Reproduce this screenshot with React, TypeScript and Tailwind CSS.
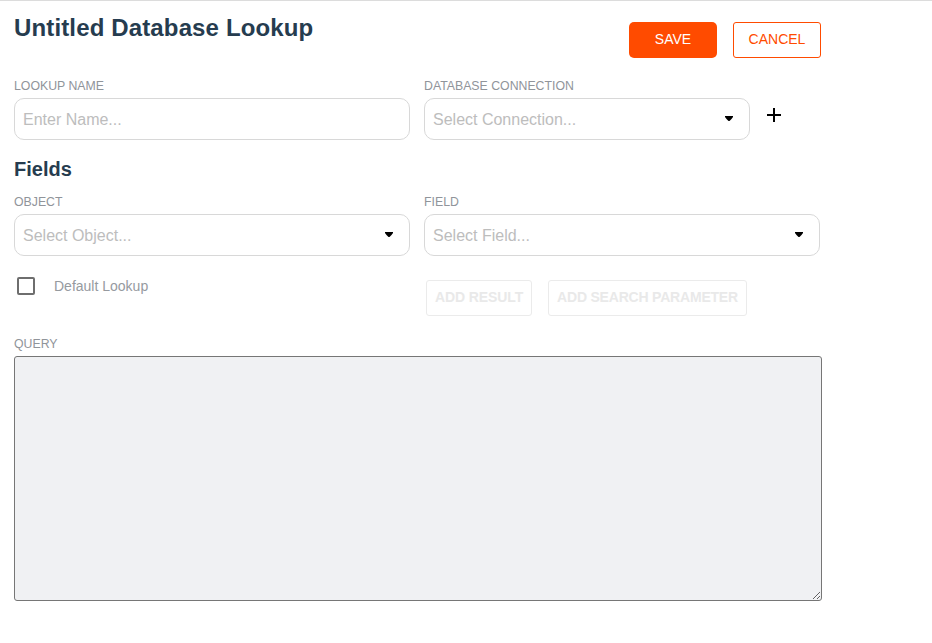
import React from "react";

function Caret() {
  return (
    <svg width="8" height="5" viewBox="0 0 8 5" className="absolute right-[16px] top-[17px]">
      <path d="M0 0 H8 V1 L6.5 3 L4.5 5 H3.5 L1.5 3 L0 1 Z" fill="#000" />
    </svg>
  );
}

function Label({ children }: { children: React.ReactNode }) {
  return <div className="text-[12.3px] leading-[14px] text-[#90949a] uppercase">{children}</div>;
}

function Select({ text, className }: { text: string; className: string }) {
  return (
    <div className={`relative h-[42px] mt-[5px] rounded-[10px] border border-[#d8d8d8] bg-white pl-[8px] pt-[2px] flex items-center text-[16px] text-[#bdbdbd] ${className}`}>
      {text}
      <Caret />
    </div>
  );
}

export default function App() {
  return (
    <div className="w-[932px] h-[643px] bg-white border-t border-[#dcdcdc] font-['Liberation_Sans',Arial,sans-serif] overflow-hidden">
      <div className="w-[808px] ml-[14px]">
        <div className="flex h-[78px]">
          <h1 className="text-[24px] leading-[28px] mt-[13px] font-bold text-[#263c4f] tracking-[0.14px] grow">Untitled Database Lookup</h1>
          <div className="flex gap-[16px] mt-[21px] mr-[1px] h-[36px]">
            <button className="w-[88px] h-[36px] pb-[2px] rounded-[5px] bg-[#ff4b00] text-white text-[14px]">SAVE</button>
            <button className="w-[88px] h-[36px] pb-[2px] rounded-[3px] border border-[#ff4b00] text-[#ff4b00] text-[14px]">CANCEL</button>
          </div>
        </div>
        <div className="flex gap-[14px]">
          <div className="w-[396px]">
            <Label>Lookup Name</Label>
            <input
              readOnly
              placeholder="Enter Name..."
              className="w-full h-[42px] mt-[5px] rounded-[10px] border border-[#d8d8d8] pl-[8px] pt-[2px] text-[16px] outline-none placeholder:text-[#bdbdbd]"
            />
          </div>
          <div className="w-[326px]">
            <Label>Database Connection</Label>
            <Select text="Select Connection..." className="w-[326px]" />
          </div>
          <svg width="16" height="16" viewBox="0 0 16 16" className="ml-[2px] mt-[28px]">
            <path d="M8 1 V15 M1 8 H15" stroke="#000" strokeWidth="2" fill="none" />
          </svg>
        </div>
        <h2 className="text-[20px] leading-[24px] mt-[17px] font-bold text-[#263c4f]">Fields</h2>
        <div className="flex gap-[14px] mt-[14px]">
          <div className="w-[396px]">
            <Label>Object</Label>
            <Select text="Select Object..." className="w-[396px]" />
          </div>
          <div className="w-[396px]">
            <Label>Field</Label>
            <Select text="Select Field..." className="w-[396px]" />
          </div>
        </div>
        <div className="flex h-[57px] mt-[24px]">
          <div className="w-[412px] flex items-start pl-[3px]">
            <span className="w-[18px] h-[18px] rounded-[2px] border-2 border-[#6e6e6e] mt-[-3px] shrink-0" />
            <span className="ml-[19px] text-[14px] leading-[16px] text-[#969a9f] mt-[-2px]">Default Lookup</span>
          </div>
          <div className="flex gap-[16px] h-[36px]">
            <button disabled className="w-[106px] h-[36px] pb-[2px] rounded-[3px] border border-[#ebebeb] text-[14px] font-bold tracking-[-0.1px] text-[#e9e9e9]">ADD RESULT</button>
            <button disabled className="w-[199px] h-[36px] pb-[2px] rounded-[3px] border border-[#ebebeb] text-[14px] font-bold tracking-[-0.2px] text-[#e9e9e9]">ADD SEARCH PARAMETER</button>
          </div>
        </div>
        <Label>Query</Label>
        <textarea
          readOnly
          className="block w-[808px] h-[245px] mt-[5px] rounded-[3px] border border-[#767676] bg-[#f0f1f3] resize outline-none"
        />
      </div>
    </div>
  );
}
